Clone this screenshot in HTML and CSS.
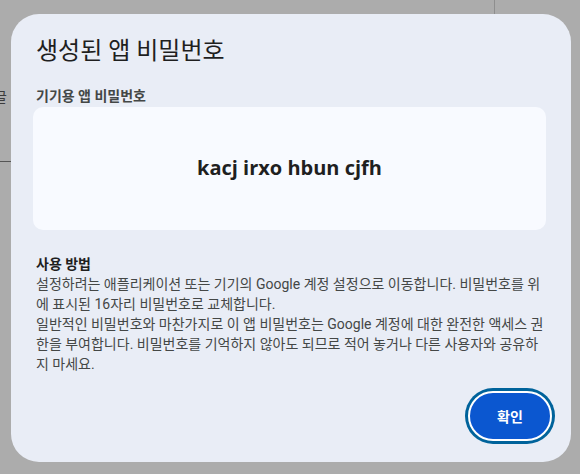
FILE: index.html
```html
<!DOCTYPE html>
<html lang="ko">
<head>
<meta charset="utf-8">
<link rel="stylesheet" href="styles.css">
</head>
<body>
<div class="page">
  <div class="page-side">
    <span class="side-text">글</span>
    <div class="side-rule"></div>
  </div>
  <div class="page-col"></div>
</div>
<div class="dialog" role="dialog">
  <h1 class="title">생성된 앱 비밀번호</h1>
  <div class="label">기기용 앱 비밀번호</div>
  <div class="pw-box"><span class="pw">kacj irxo hbun cjfh</span></div>
  <div class="howto">
    <div class="howto-title">사용 방법</div>
    <p class="howto-text">설정하려는 애플리케이션 또는 기기의 Google 계정 설정으로 이동합니다. 비밀번호를 위에 표시된 16자리 비밀번호로 교체합니다.</p>
    <p class="howto-text">일반적인 비밀번호와 마찬가지로 이 앱 비밀번호는 Google 계정에 대한 완전한 액세스 권한을 부여합니다. 비밀번호를 기억하지 않아도 되므로 적어 놓거나 다른 사용자와 공유하지 마세요.</p>
  </div>
  <div class="actions">
    <button class="btn">확인</button>
  </div>
</div>
</body>
</html>
```

FILE: styles.css
```css
html, body {
  margin: 0;
  padding: 0;
  height: 100%;
}
body {
  background: #acacac;
  font-family: "Roboto", "Noto Sans CJK KR", sans-serif;
  overflow: hidden;
  position: relative;
}
.page {
  display: flex;
  height: 100%;
}
.page-side {
  width: 11px;
  overflow: hidden;
  position: relative;
}
.side-text {
  position: absolute;
  left: -6px;
  top: 86px;
  font-size: 14px;
  color: #3c3c3c;
}
.side-rule {
  position: absolute;
  left: 0;
  top: 161px;
  width: 11px;
  height: 1px;
  background: #555;
}
.page-col {
  margin-left: 483px;
  width: 1px;
  height: 14px;
  background: #8e8e8e;
}
.dialog {
  position: absolute;
  left: 11px;
  top: 14px;
  width: 560px;
  height: 448px;
  box-sizing: border-box;
  background: #e9edf6;
  border-radius: 28px;
  padding: 21px 25px 20px 22px;
  display: flex;
  flex-direction: column;
}
.title {
  margin: 0 0 0 3px;
  font-size: 24px;
  font-weight: 400;
  line-height: 32px;
  color: #1f1f1f;
}
.label {
  margin: 19px 0 0 3px;
  font-size: 14px;
  font-weight: 700;
  line-height: 20px;
  color: #444746;
}
.pw-box {
  margin-top: 1px;
  height: 123px;
  background: #f8faff;
  border-radius: 10px;
  display: flex;
  align-items: center;
  justify-content: center;
}
.pw {
  font-family: "Open Sans", "Roboto", sans-serif;
  font-size: 20px;
  font-weight: 700;
  color: #1f1f1f;
  letter-spacing: 0;
  padding-bottom: 2px;
}
.howto {
  margin: 24px 0 0 3px;
  font-size: 14px;
  line-height: 20px;
  color: #444746;
}
.howto-title {
  font-weight: 700;
  color: #1f1f1f;
}
.howto-text {
  margin: 0;
  padding-right: 2px;
  word-break: break-all;
}
.actions {
  margin-top: auto;
  display: flex;
  justify-content: flex-end;
}
.btn {
  width: 84px;
  height: 50px;
  border-radius: 25px;
  background: #0b57d0;
  color: #fff;
  font-family: "Roboto", "Noto Sans CJK KR", sans-serif;
  font-size: 14px;
  font-weight: 700;
  border: 2px solid #fff;
  box-shadow: 0 0 0 3px #00639b;
  margin: 0 -6px 1px 0;
}
```
